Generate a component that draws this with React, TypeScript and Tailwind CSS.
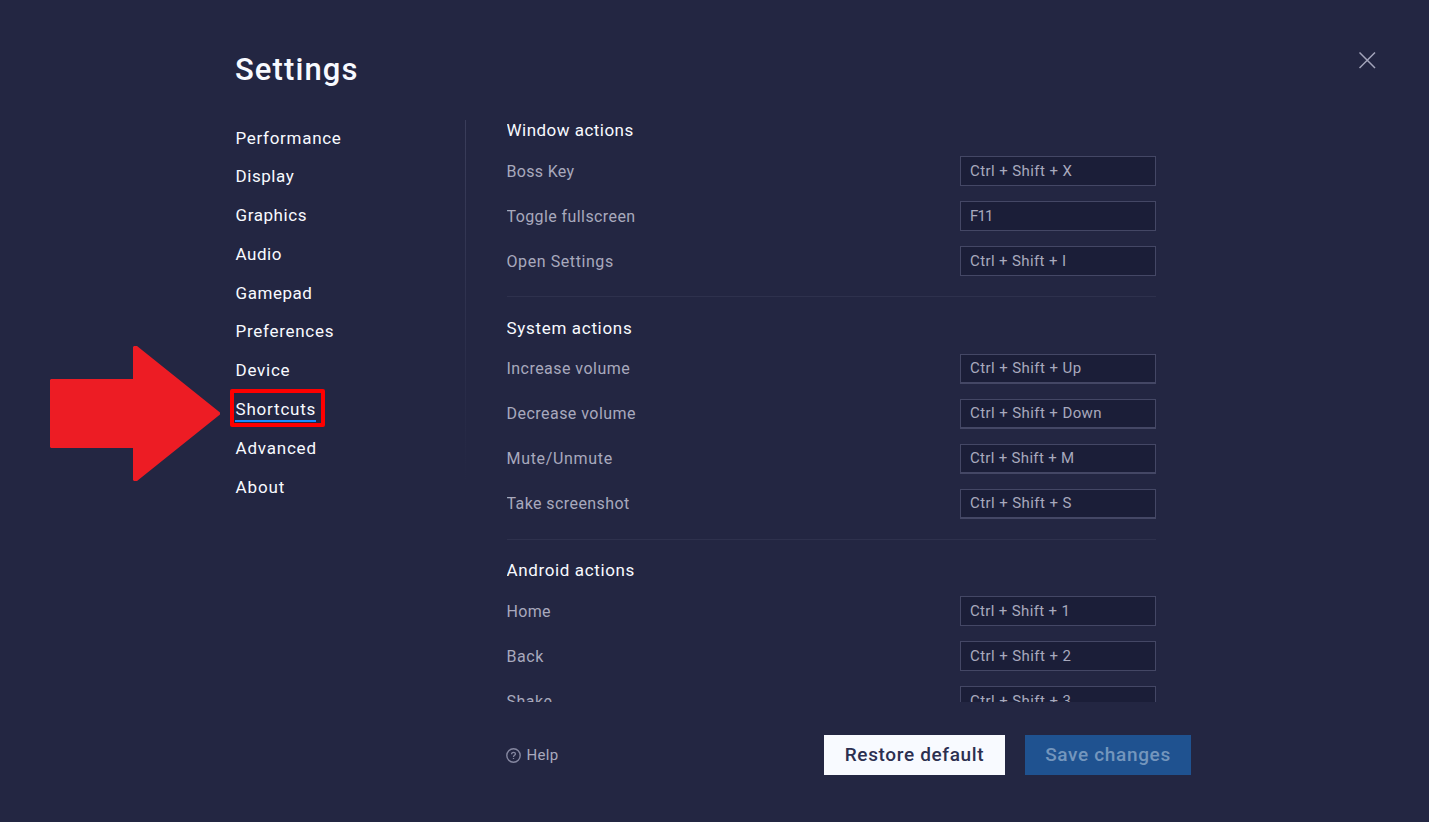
import React from "react";

const navItems = [
  { label: "Performance", cls: "tracking-[0.7px]" },
  { label: "Display", cls: "tracking-[0.55px]" },
  { label: "Graphics", cls: "tracking-[0.58px]" },
  { label: "Audio", cls: "tracking-[0.55px]" },
  { label: "Gamepad", cls: "tracking-[0.55px]" },
  { label: "Preferences", cls: "tracking-[0.72px]" },
  { label: "Device", cls: "tracking-[0.75px]" },
  { label: "Shortcuts", cls: "tracking-[0.8px]" },
  { label: "Advanced", cls: "tracking-[0.8px]" },
  { label: "About", cls: "tracking-[0.9px]" },
];

type Row = { label: string; keys: string; cls: string; keyCls: string };
type Section = {
  title: string;
  cls: string;
  pad: string;
  box: string;
  labelLeading: string;
  rows: Row[];
};

const sections: Section[] = [
  {
    title: "Window actions",
    cls: "tracking-[0.47px]",
    pad: "",
    box: "border leading-7",
    labelLeading: "pt-px",
    rows: [
      { label: "Boss Key", keys: "Ctrl + Shift + X", cls: "tracking-[0.32px]", keyCls: "tracking-[0.42px]" },
      { label: "Toggle fullscreen", keys: "F11", cls: "tracking-[0.41px]", keyCls: "tracking-[-0.9px]" },
      { label: "Open Settings", keys: "Ctrl + Shift + I", cls: "tracking-[0.58px]", keyCls: "tracking-[0.38px]" },
    ],
  },
  {
    title: "System actions",
    cls: "tracking-[0.68px]",
    pad: "pt-[21px]",
    box: "border border-b-2 leading-[27px]",
    labelLeading: "",
    rows: [
      { label: "Increase volume", keys: "Ctrl + Shift + Up", cls: "tracking-[0.46px]", keyCls: "tracking-[0.42px]" },
      { label: "Decrease volume", keys: "Ctrl + Shift + Down", cls: "tracking-[0.47px]", keyCls: "tracking-[0.41px]" },
      { label: "Mute/Unmute", keys: "Ctrl + Shift + M", cls: "tracking-[0.68px]", keyCls: "tracking-[0.32px]" },
      { label: "Take screenshot", keys: "Ctrl + Shift + S", cls: "tracking-[0.42px]", keyCls: "tracking-[0.42px]" },
    ],
  },
  {
    title: "Android actions",
    cls: "tracking-[0.63px]",
    pad: "pt-5",
    box: "border leading-7",
    labelLeading: "pt-px",
    rows: [
      { label: "Home", keys: "Ctrl + Shift + 1", cls: "tracking-[0.35px]", keyCls: "tracking-[0.35px]" },
      { label: "Back", keys: "Ctrl + Shift + 2", cls: "tracking-[0.55px]", keyCls: "tracking-[0.42px]" },
      { label: "Shake", keys: "Ctrl + Shift + 3", cls: "tracking-[0.5px]", keyCls: "tracking-[0.42px]" },
    ],
  },
];

function Sidebar() {
  return (
    <nav className="flex w-[230px] flex-col items-start pt-[6.5px] pl-[0.5px]">
      {navItems.map((item) => (
        <div key={item.label} className="flex h-[38.8px] shrink-0 items-start">
          <button
            className={`relative whitespace-nowrap text-[17px] leading-[22px] text-[#f8faff] ${item.cls}`}
          >
            {item.label}
            {item.label === "Shortcuts" && (
              <>
                <span className="absolute top-[21.9px] -left-[0.5px] h-[2px] w-[81px] bg-[#1a8cff]" />
                <span className="absolute -top-[8.6px] -left-[6px] h-[38px] w-[95px] rounded-[2px] border-4 border-[#fe0000]" />
              </>
            )}
          </button>
        </div>
      ))}
    </nav>
  );
}

function SectionBlock({ section, last }: { section: Section; last: boolean }) {
  return (
    <section
      className={`shrink-0 pb-5 ${section.pad} ${last ? "" : "border-b border-[#2e314d]"}`}
    >
      <h2 className={`h-5 text-[17px] leading-5 whitespace-nowrap text-[#f8faff] ${section.cls}`}>
        {section.title}
      </h2>
      <div className="mt-4 flex flex-col gap-[15px]">
        {section.rows.map((row) => (
          <div key={row.label} className="flex h-[30px] items-start justify-between">
            <span
              className={`text-[16px] leading-[30px] text-[#a8a9bd] ${section.labelLeading} ${row.cls}`}
            >
              {row.label}
            </span>
            <div
              className={`h-[30px] w-[196px] border-[#444765] bg-[#1b1e38] pl-[9px] text-[15px] whitespace-nowrap text-[#a8a9bd] ${section.box} ${row.keyCls}`}
            >
              {row.keys}
            </div>
          </div>
        ))}
      </div>
    </section>
  );
}

export default function App() {
  return (
    <div className="relative flex h-[822px] w-[1429px] flex-col overflow-hidden bg-[#232642] font-['Roboto','Liberation_Sans',sans-serif]">
      <header className="flex h-[120px] shrink-0 items-start justify-between pr-[53px] pl-[235px]">
        <h1 className="pt-[50px] text-[31px] leading-10 font-medium tracking-[1.1px] text-[#f8faff]">Settings</h1>
        <button aria-label="Close" className="mt-[52px]">
          <svg width="17" height="17" viewBox="0 0 17 17" fill="none" stroke="#a3a4ba" strokeWidth="1.5">
            <path d="M0.5 0.5 16 16M16 0.5 0.5 16" />
          </svg>
        </button>
      </header>

      <div className="flex h-[582px] shrink-0 pl-[235px]">
        <Sidebar />
        <div className="h-[360px] w-px bg-linear-to-b from-[#3a3d5a] to-[#232642]" />
        <main className="ml-[40.5px] flex w-[649.5px] flex-col overflow-hidden">
          {sections.map((s, i) => (
            <SectionBlock key={s.title} section={s} last={i === sections.length - 1} />
          ))}
        </main>
      </div>

      <footer className="mt-[33px] flex h-10 items-center justify-between pr-[238px] pl-[506px]">
        <button className="flex items-center gap-[5.5px] text-[15px] leading-5 tracking-[0.3px] text-[#a8a9bd]">
          <svg className="mt-px" width="15" height="15" viewBox="0 0 15 15" fill="none" stroke="#8587a0">
            <circle cx="7.5" cy="7.5" r="6.7" strokeWidth="1.4" />
            <path d="M5.6 6.2C5.6 3.7 9.5 3.8 9.4 6.1 9.3 7.3 7.5 7.3 7.5 8.9M7.5 9.9V11.1" strokeWidth="1.3" />
          </svg>
          Help
        </button>
        <div className="flex gap-5">
          <button className="h-10 w-[181px] bg-[#f8faff] text-[19px] leading-10 font-medium tracking-[0.65px] whitespace-nowrap text-[#2c2f50]">
            Restore default
          </button>
          <button className="h-10 w-[166px] bg-[#1f5290] text-[19px] leading-10 font-medium tracking-[0.65px] whitespace-nowrap text-[#7496bd]">
            Save changes
          </button>
        </div>
      </footer>

      <svg className="absolute top-[345px] left-[50px]" width="171" height="137" viewBox="0 0 171 137">
        <path
          d="M1 34H83V2L84 1H87L170 67.500V69.500L87 136H84L83 135V103H1L0 102V35Z"
          fill="#ed1c24"
        />
      </svg>
    </div>
  );
}
